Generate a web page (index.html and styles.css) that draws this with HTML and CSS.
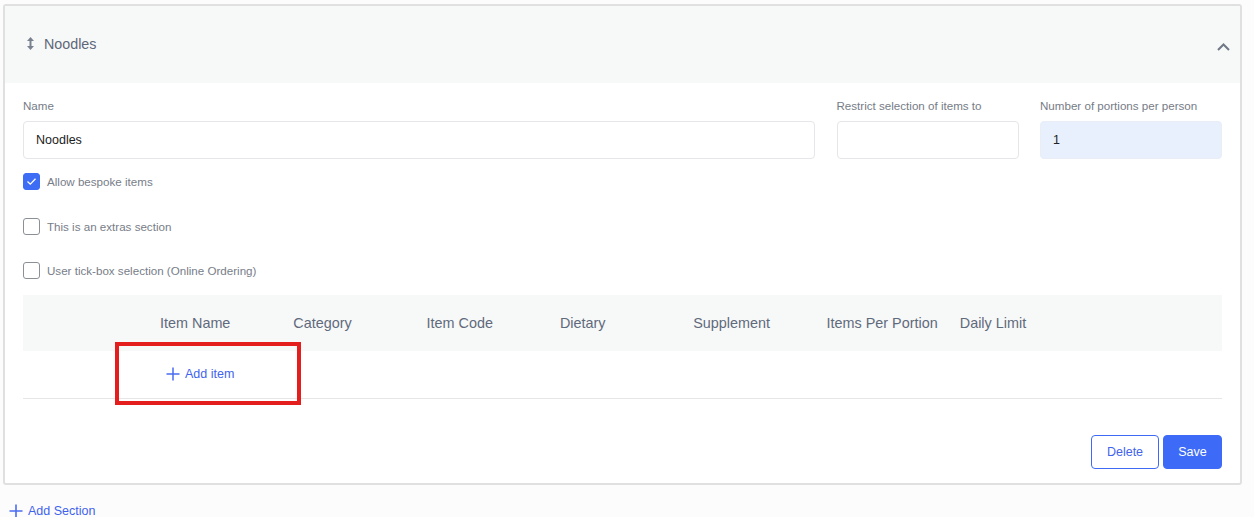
FILE: index.html
```html
<!DOCTYPE html>
<html lang="en">
<head>
<meta charset="utf-8">
<title>Section editor</title>
<link rel="stylesheet" href="styles.css">
</head>
<body>
<div class="card">
  <div class="card-header">
    <div class="title">
      <svg class="sort-icon" width="7" height="13" viewBox="0 0 7 13"><path d="M3.5 0 L7 4 H4.5 V9 H7 L3.5 13 L0 9 H2.5 V4 H0 Z" fill="#7a8290"/></svg>
      <span>Noodles</span>
    </div>
    <svg class="chevron" width="13" height="8" viewBox="0 0 13 8"><path d="M1 7 L6.5 1.5 L12 7" fill="none" stroke="#6f7987" stroke-width="2"/></svg>
  </div>
  <div class="card-body">
    <div class="form-row">
      <div class="field">
        <label class="label">Name</label>
        <div class="input">Noodles</div>
      </div>
      <div class="field">
        <label class="label">Restrict selection of items to</label>
        <div class="input"></div>
      </div>
      <div class="field">
        <label class="label">Number of portions per person</label>
        <div class="input filled">1</div>
      </div>
    </div>
    <div class="checks">
      <div class="check">
        <span class="box checked"><svg width="11" height="9" viewBox="0 0 11 9"><path d="M1.5 4.5 L4.3 7.2 L9.5 1.8" fill="none" stroke="#fff" stroke-width="1.3"/></svg></span>
        <span class="check-label">Allow bespoke items</span>
      </div>
      <div class="check">
        <span class="box"></span>
        <span class="check-label">This is an extras section</span>
      </div>
      <div class="check">
        <span class="box"></span>
        <span class="check-label">User tick-box selection (Online Ordering)</span>
      </div>
    </div>
    <div class="table">
      <div class="thead">
        <div class="th"></div>
        <div class="th">Item Name</div>
        <div class="th">Category</div>
        <div class="th">Item Code</div>
        <div class="th">Dietary</div>
        <div class="th">Supplement</div>
        <div class="th">Items Per Portion</div>
        <div class="th">Daily Limit</div>
      </div>
      <div class="tbody">
        <div class="td"></div>
        <div class="td">
          <a class="add-item"><svg width="14" height="14" viewBox="0 0 14 14"><path d="M7 0.5 V13.5 M0.5 7 H13.5" stroke="#4a6cf0" stroke-width="1.5"/></svg>Add item</a>
        </div>
      </div>
      <div class="highlight"></div>
    </div>
    <div class="actions">
      <button class="btn btn-outline">Delete</button>
      <button class="btn btn-primary">Save</button>
    </div>
  </div>
</div>
<a class="add-section"><svg width="14" height="14" viewBox="0 0 14 14"><path d="M7 0.5 V13.5 M0.5 7 H13.5" stroke="#4a6cf0" stroke-width="1.6"/></svg>Add Section</a>
</body>
</html>
```
FILE: styles.css
```css
* { box-sizing: border-box; }
html, body { margin: 0; padding: 0; }
body {
  background: #fcfcfc;
  font-family: "Liberation Sans", Arial, sans-serif;
  color: #333;
  width: 1254px;
  height: 517px;
  overflow: hidden;
}
.card {
  margin: 4px 12px 0 3px;
  border: 2px solid #e0e0e0;
  border-radius: 3px;
  background: #fff;
}
.card-header {
  height: 77px;
  background: #f7f8f8;
  display: flex;
  align-items: center;
  justify-content: space-between;
  padding: 0 10px 2px 22px;
}
.title {
  display: flex;
  align-items: center;
  gap: 10px;
  font-size: 14.3px;
  color: #5d6778;
}
.sort-icon { display: block; margin-top: -1px; }
.chevron { display: block; margin-top: 7px; }
.card-body {
  padding: 16px 18px 14px 18px;
}
.form-row {
  display: grid;
  grid-template-columns: 1fr 182px 182px;
  column-gap: 21.5px;
}
.field { display: flex; flex-direction: column; }
.label {
  font-size: 11.6px;
  line-height: 14px;
  color: #767c87;
  margin-bottom: 8px;
}
.input {
  height: 38px;
  border: 1px solid #e4e6ea;
  border-radius: 4px;
  padding-left: 12px;
  display: flex;
  align-items: center;
  font-size: 12.5px;
  color: #222;
}
.input.filled {
  background: #e8f0fe;
  border-color: #e8edf6;
}
.checks {
  display: flex;
  flex-direction: column;
  gap: 27.5px;
  margin-top: 14px;
}
.check {
  display: flex;
  align-items: center;
  gap: 7px;
  height: 17px;
}
.box {
  width: 17px;
  height: 17px;
  border: 1px solid #8b8f96;
  border-radius: 3px;
  display: flex;
  align-items: center;
  justify-content: center;
}
.box.checked {
  background: #3e6df5;
  border-color: #3e6df5;
}
.box svg { display: block; }
.check-label {
  font-size: 11.6px;
  color: #777d88;
}
.table {
  margin-top: 16px;
  position: relative;
}
.thead, .tbody {
  display: grid;
  grid-template-columns: 137px repeat(6, 133.3px) 1fr;
}
.thead {
  height: 56px;
  background: #f7f8f8;
  align-items: center;
}
.th {
  font-size: 14.4px;
  color: #5f6a7c;
  white-space: nowrap;
}
.tbody {
  height: 48px;
  border-bottom: 1px solid #e6e6e6;
  align-items: center;
}
.add-item {
  display: flex;
  align-items: center;
  gap: 5px;
  padding-left: 6px;
  font-size: 12.5px;
  color: #3f63ee;
  margin-top: -2px;
}
.add-item svg { display: block; }
.highlight {
  position: absolute;
  left: 92px;
  top: 47px;
  width: 186px;
  height: 63px;
  border: 4px solid #e41d1d;
}
.actions {
  display: flex;
  justify-content: flex-end;
  gap: 4px;
  margin-top: 36px;
}
.btn {
  height: 34px;
  border-radius: 4px;
  font-family: "Liberation Sans", Arial, sans-serif;
  font-size: 12.5px;
  padding: 0;
}
.btn-outline {
  width: 68px;
  background: #fff;
  border: 1px solid #3f6af5;
  color: #3f63ee;
}
.btn-primary {
  width: 59px;
  background: #3d6bf7;
  border: 1px solid #3d6bf7;
  color: #fff;
}
.add-section {
  display: flex;
  align-items: center;
  gap: 5px;
  margin: 19px 0 0 9px;
  font-size: 12.5px;
  color: #3f63ee;
}
.add-section svg { display: block; }
```
